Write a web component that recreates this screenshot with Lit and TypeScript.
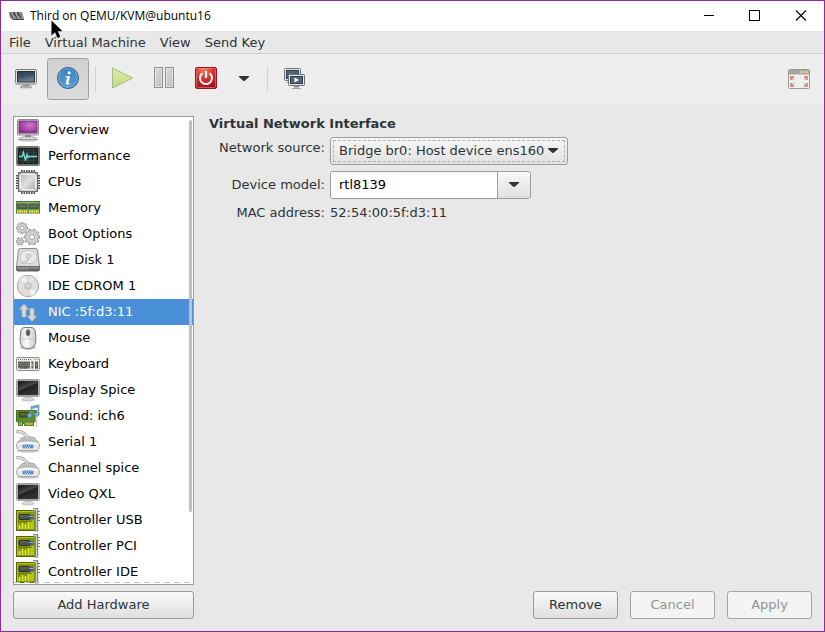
import { LitElement, html, svg, css, nothing, TemplateResult, SVGTemplateResult } from "lit";
import { customElement, property, state } from "lit/decorators.js";
import { classMap } from "lit/directives/class-map.js";

const gear = (cx: number, cy: number, r: number, hole: number, teeth: number) => {
  const pts: string[] = [];
  const step = (Math.PI * 2) / teeth;
  for (let i = 0; i < teeth; i++) {
    const a = i * step;
    for (const [da, rr] of [[-0.3, 0.78], [-0.2, 1], [0.2, 1], [0.3, 0.78]]) {
      pts.push(`${(cx + Math.cos(a + da * step) * r * rr).toFixed(2)},${(cy + Math.sin(a + da * step) * r * rr).toFixed(2)}`);
    }
  }
  return svg`<polygon points=${pts.join(" ")} fill="#d3d3d0" stroke="#8f918d" stroke-width=".9"/>
    <circle cx=${cx} cy=${cy} r=${hole} fill="#fafafa" stroke="#9b9d99" stroke-width=".9"/>`;
};

const darkScreen = svg`
  <defs><linearGradient id="dk" x1="0" y1="0" x2=".6" y2="1">
    <stop offset="0" stop-color="#111"/><stop offset=".5" stop-color="#4a4a4a"/><stop offset=".55" stop-color="#222"/><stop offset="1" stop-color="#333"/>
  </linearGradient></defs>
  <ellipse cx="12" cy="22" rx="7" ry="1.6" fill="#000" opacity=".15"/>
  <path d="M9 18h6l.6 3h-7.2z" fill="#d3d5d2"/>
  <rect x="7" y="20" width="10" height="2" rx="1" fill="#eeeeec" stroke="#acaeab" stroke-width=".7"/>
  <rect x=".5" y="1.500" width="23" height="17" rx="1" fill="#e9e9e7" stroke="#a0a29f"/>
  <rect x="2" y="3" width="20" height="14" fill="url(#dk)" stroke="#2b2b2b" stroke-width=".7"/>`;

const serial = svg`
  <defs><linearGradient id="se" x1="0" y1="0" x2="0" y2="1"><stop offset="0" stop-color="#c9cac7"/><stop offset="1" stop-color="#f1f1f0"/></linearGradient></defs>
  <ellipse cx="12" cy="21" rx="11.500" ry="1.800" opacity=".2"/>
  <path d="M5.500 8Q12 5 18.500 8L23.200 14Q24.200 19.500 20 20.500H4Q-.2 19.500 .8 14z" fill="url(#se)" stroke="#9fa19d"/>
  <path d="M5.500 9.500Q12 6.500 18.500 9.500l2.500 3.500Q12 10 3 13z" fill="#b9bbb7"/>
  <path d="M0 1.500c6-.5 10 2 12 7.500" fill="none" stroke="#a5a7a3" stroke-width="3"/>
  <path d="M0 1.500c6-.5 10 2 12 7.500" fill="none" stroke="#e4e5e3" stroke-width="1.400"/>
  <path d="M1.500 14.500Q12 10.500 22.500 14.500" fill="none" stroke="#fff" stroke-width="1.400"/>
  <rect x="6.500" y="14.500" width="11" height="4" rx="1.500" fill="#4a86c8" stroke="#b4c7dc"/>
  <path d="M8 16h8M9 17.500h6" stroke="#c9ddf2" stroke-dasharray="1 1"/>`;

const card = svg`
  <rect x=".5" y="2.500" width="19" height="20" fill="#87960c" stroke="#56640c"/>
  <path d="M1.500 21.500v-18h17" fill="none" stroke="#b4c31c"/>
  <path d="M14 13l4-1v9h-4z" fill="#b5c51a"/>
  <path d="M3.500 21v-4M6.500 21v-6M9.500 21v-5M12.500 21v-7" stroke="#dde83a" stroke-width="1.800"/>
  <path d="M1.500 13.500h14" stroke="#6c7a0c"/>
  <rect x="3" y="6.500" width="11" height="5" rx="1" fill="#4d504c" stroke="#2e302d"/>
  <path d="M4 8h9" stroke="#6f726e"/>
  <rect x="13.500" y="7" width="4" height="4" fill="#2f5d90"/><path d="M13.500 8.500h4" stroke="#8ab3dd"/>
  <path d="M24 3.500h-3M24 6.500h-3M24 9.500h-3M24 12.500h-3" stroke="#80827e" stroke-width="1.200"/>
  <path d="M17 1.500h3.500v22" fill="none" stroke="#73756f" stroke-width="3.400"/>
  <path d="M17 1.500h3.500v22" fill="none" stroke="#cdcfcb" stroke-width="1.400"/>`;

const icons: Record<string, SVGTemplateResult> = {
  overview: svg`<defs><radialGradient id="pu" cx=".6" cy=".35" r=".7"><stop offset="0" stop-color="#cf74cf"/><stop offset="1" stop-color="#8e2d96"/></radialGradient></defs>
    <ellipse cx="12" cy="22" rx="10.500" ry="1.800" opacity=".2"/>
    <path d="M9 17h6v3h-6z" fill="#8a8c88"/>
    <path d="M3 21.500q1-2.500 4-2.500h10q3 0 4 2.500z" fill="#e6e6e4" stroke="#888a85" stroke-width=".8"/>
    <rect x="1.500" y="1.500" width="21" height="15.500" rx="1" fill="#d9dad7" stroke="#8b8d89"/>
    <rect x="3" y="3" width="18" height="12" fill="url(#pu)" stroke="#6c2a70" stroke-width=".8"/>`,
  performance: svg`<rect x=".5" y="2.500" width="23" height="19" rx="1" fill="#cfd1ce" stroke="#747672"/>
    <rect x="2" y="4" width="20" height="16" fill="#243031" stroke="#111"/>
    <path d="M3 8.500h18M3 12.500h18M3 16.500h18M7.500 4v16M12.500 4v16M17.500 4v16" stroke="#35494a" stroke-width=".6"/>
    <path d="M3 12.500h3l1.500-4 2 8 1.500-6 1 3 1-1h8" fill="none" stroke="#6fe6cd" stroke-width="1.300"/>`,
  cpu: svg`<defs><linearGradient id="cp" x1="0" y1="0" x2="1" y2="1"><stop offset="0" stop-color="#b9b9b7"/><stop offset=".5" stop-color="#e0e0de"/><stop offset="1" stop-color="#a9aaa8"/></linearGradient></defs>
    <path d="M5 1.500h15M5 22.500h15M1.500 5v15M22.500 5v15" stroke="#555753" stroke-width="3" stroke-dasharray="1.600 .9"/>
    <rect x="2.500" y="2.500" width="19" height="19" rx="1.500" fill="#d5d6d3" stroke="#6d6f6b"/>
    <path d="M2 2l3 3M22 2l-3 3M2 22l3-3M22 22l-3-3" stroke="#6d6f6b"/>
    <rect x="4.500" y="4.500" width="15" height="15" rx="1" fill="url(#cp)" stroke="#f1f1f0"/>`,
  memory: svg`<rect x=".5" y="5.500" width="23" height="11" fill="#5f9848" stroke="#4c7a3b"/>
    <path d="M1 7h22" stroke="#a6cf92"/>
    <rect x="2" y="8" width="9" height="4.500" fill="#5b5d59" stroke="#3c5a32" stroke-width=".8"/><rect x="13" y="8" width="9" height="4.500" fill="#5b5d59" stroke="#3c5a32" stroke-width=".8"/>
    <path d="M3 10h7M14 10h7" stroke="#7d7f7b"/>
    <path d="M1 15.500h10.500M13 15.500h10" stroke="#e8d44d" stroke-width="3" stroke-dasharray="1.700 .6"/>
    <path d="M0 17.500h24" stroke="#6a8a5a" opacity=".6"/>`,
  boot: svg`${gear(16, 15, 8, 2.6, 10)}${gear(6, 6, 5.8, 2, 8)}${gear(4, 19.5, 4, 1.3, 6)}`,
  disk: svg`<defs><linearGradient id="hd" x1="0" y1="0" x2="0" y2="1"><stop offset="0" stop-color="#a5a7a4"/><stop offset="1" stop-color="#484a47"/></linearGradient></defs>
    <path d="M.5 18.500L2.500 2q.3-1.500 1.700-1.500h15.600q1.400 0 1.700 1.500L23.500 18.500z" fill="#dcdddb" stroke="#8b8d89"/>
    <ellipse cx="12.500" cy="9" rx="8.500" ry="6.800" fill="#e9e9e8" stroke="#c3c5c1"/>
    <ellipse cx="12.500" cy="8" rx="2.500" ry="2" fill="#dcdddb" stroke="#bbbdb9"/>
    <path d="M5 15.500l5-1.500 3-4" fill="none" stroke="#c3c5c1" stroke-width="1.600"/>
    <path d="M.5 18.500h23v3q0 1.500-1.500 1.500H2Q.5 23 .5 21.500z" fill="url(#hd)" stroke="#666864"/>
    <path d="M3 21h9" stroke="#b9bbb7" stroke-dasharray="1 1"/>`,
  cdrom: svg`<circle cx="12" cy="12" r="10.700" fill="#dededc" stroke="#a9aba7"/>
    <path d="M12 12L4 5.500Q6 3 9 2zM12 12l8 6.500Q18 21 15 22z" fill="#f0f0ef"/>
    <path d="M12 12L2.500 8 4 5.500z" fill="#e3d9ee"/><path d="M12 12l9.500 4L20 18.500z" fill="#d2e6ea"/><path d="M12 12l3-9.500L18 4z" fill="#eee9d4"/><path d="M12 12L9 21.500 6 20z" fill="#f0dcca"/>
    <circle cx="12" cy="12" r="3.500" fill="#d2d3d0" stroke="#c0c2be"/><circle cx="12" cy="12" r="1.500" fill="#fff" stroke="#b1b3af" stroke-width=".8"/>`,
  nic: svg`<path d="M8 4l4.700 5.500H10V17H6V9.500H3.300z" fill="#dad8d5" stroke="#b2aca6" stroke-width=".8"/>
    <path d="M16 21.500L11.300 16H14V8.500h4V16h2.700z" fill="#dad8d5" stroke="#b2aca6" stroke-width=".8"/>`,
  mouse: svg`<defs><linearGradient id="mo" x1="0" y1="0" x2="1" y2="0"><stop offset="0" stop-color="#d3d4d1"/><stop offset=".4" stop-color="#fbfbfb"/><stop offset="1" stop-color="#c7c8c5"/></linearGradient></defs>
    <ellipse cx="12" cy="21.500" rx="8" ry="2.200" opacity=".25"/>
    <path d="M4.500 7Q4.500 1.500 9 1.500h6q4.500 0 4.500 5.500l.5 6q0 9.500-8 9.500T4 13z" fill="url(#mo)" stroke="#7c7e7a"/>
    <path d="M4.500 12Q8 14.500 12 12.500q4 2 7.500-.5M12 2v3" fill="none" stroke="#c3c5c1" stroke-width=".8"/>
    <rect x="10" y="3.500" width="4" height="6.500" rx="2" fill="#555753" stroke="#9a9c98" stroke-width=".7"/>`,
  keyboard: svg`<rect x=".5" y="5.500" width="23" height="13" rx="1" fill="#ecedeb" stroke="#8e908c"/>
    <path d="M2 7.500h14" stroke="#666864" stroke-dasharray="1 1"/><path d="M18 7.500h4" stroke="#73d216" stroke-dasharray="1 .5"/>
    <rect x="2" y="9.500" width="12" height="7" fill="#8d8f8b"/><rect x="15.500" y="9.500" width="2" height="7" fill="#8d8f8b"/><rect x="19" y="9.500" width="3" height="7" fill="#8d8f8b"/>
    <path d="M2 10.500h12M3 12.500h11M2 14.500h12M4 16h8M15.500 10.500h2M15.500 15.500h2M19 10.500h3M19 12.500h3M19 14.500h3M19 16h3" stroke="#4a4c48" stroke-width="1.300" stroke-dasharray="1.300 .6"/>`,
  display: darkScreen,
  sound: svg`<path d="M.5 6.500h20v11h-3v4h-9v-2h-2v2h-4v-4h-2z" fill="#5c8a31" stroke="#466e22"/>
    <rect x="3.500" y="8.500" width="8" height="4.500" fill="#4c5a3a" stroke="#30401f"/><path d="M4 10h7" stroke="#7a6a3c"/>
    <path d="M9 20h8M3 20h3" stroke="#e0c92c" stroke-width="2.400" stroke-dasharray="1.400 .7"/>
    <path d="M20.500 12v11" stroke="#d3d5d1" stroke-width="1.800"/>
    <path d="M15.500 11V3l7-1.500V10" fill="none" stroke="#5b94bd" stroke-width="1.600"/><path d="M15 4l8-2" stroke="#6fa8d0" stroke-width="2.400"/>
    <ellipse cx="13.700" cy="11.500" rx="2.300" ry="1.900" fill="#7fb3d8" stroke="#4a80a8" stroke-width=".7"/><ellipse cx="20.800" cy="10.300" rx="2.300" ry="1.900" fill="#7fb3d8" stroke="#4a80a8" stroke-width=".7"/>`,
  serial,
  controller: card,

  console: svg`<defs><linearGradient id="sc" x1="0" y1="0" x2=".3" y2="1"><stop offset="0" stop-color="#2d3d4e"/><stop offset=".5" stop-color="#3f5063"/><stop offset="1" stop-color="#72808f"/></linearGradient></defs>
    <rect x="1.500" y="2.500" width="21" height="14.500" rx="1.500" fill="#e6e6e4" stroke="#7d7f7b"/>
    <rect x="3.500" y="4.500" width="17" height="10.500" fill="url(#sc)" stroke="#25313d"/>
    <path d="M9 17.500h6v2h-6z" fill="#8f918d"/><rect x="6.500" y="19" width="11" height="1.800" rx=".9" fill="#cfd0cd" stroke="#888a85" stroke-width=".8"/>`,
  info: svg`<defs><linearGradient id="nf" x1="0" y1="0" x2="0" y2="1"><stop offset="0" stop-color="#3b7dbd"/><stop offset="1" stop-color="#5e9fd3"/></linearGradient></defs>
    <circle cx="12" cy="11" r="10.500" fill="url(#nf)" stroke="#2a5b8f"/><circle cx="12" cy="11" r="9.300" fill="none" stroke="#7fb2de" stroke-width=".8"/>
    <circle cx="13.200" cy="5.800" r="1.600" fill="#fff"/><path d="M9.500 9.200h4.600l-1.700 6.400q-.2 1 1.600.2l-.3 1q-3.900 2-3.900-.6l1.400-5.600-1.900-.4z" fill="#fff"/>`,
  play: svg`<defs><linearGradient id="pl" x1="0" y1="0" x2="0" y2="1"><stop offset="0" stop-color="#dde8a8"/><stop offset="1" stop-color="#c3dd84"/></linearGradient></defs>
    <path d="M2.500 1v20L22.500 11z" fill="url(#pl)" stroke="#a3bd7e"/>`,
  pause: svg`<defs><linearGradient id="pa" x1="0" y1="0" x2="1" y2="1"><stop offset="0" stop-color="#dededc"/><stop offset="1" stop-color="#b9bab8"/></linearGradient></defs>
    <rect x="2.500" y=".5" width="8" height="20" fill="url(#pa)" stroke="#90928e"/><rect x="13.500" y=".5" width="8" height="20" fill="url(#pa)" stroke="#90928e"/>
    <rect x="3.500" y="1.500" width="6" height="18" fill="none" stroke="#eee" opacity=".6"/><rect x="14.500" y="1.500" width="6" height="18" fill="none" stroke="#eee" opacity=".6"/>`,
  power: svg`<defs><radialGradient id="pw" cx=".4" cy=".1" r="1"><stop offset="0" stop-color="#f47b63"/><stop offset=".5" stop-color="#d62a2a"/><stop offset="1" stop-color="#8c0c1c"/></radialGradient></defs>
    <rect x="1.500" y=".5" width="21" height="21" rx="1.500" fill="url(#pw)" stroke="#9c1420"/><rect x="2.500" y="1.500" width="19" height="19" rx="1" fill="none" stroke="#f08a80" opacity=".6"/>
    <path d="M8.500 6.200a6 6 0 1 0 7 0" fill="none" stroke="#fff" stroke-width="2"/><path d="M12 4v7" stroke="#fff" stroke-width="2.200"/>`,
  screens: svg`<rect x="2.500" y="1.500" width="16" height="12" rx="1" fill="#e6e6e4" stroke="#70726e"/><rect x="4.500" y="3.500" width="12" height="8" fill="#50637a" stroke="#2e3f50"/>
    <path d="M5 15.500h3" stroke="#888a85"/>
    <rect x="6.500" y="7.500" width="16" height="11" rx="1" fill="#e6e6e4" stroke="#70726e"/><rect x="8.500" y="9.500" width="12" height="7" fill="#50637a" stroke="#2e3f50"/>
    <path d="M12.500 10.500v5l4.500-2.500z" fill="#fff"/><path d="M12 19.500h5" stroke="#888a85" stroke-width="2"/><path d="M10 21.500h9" stroke="#a0a29f"/>`,
  fullscreen: svg`<rect x="1.500" y="2.500" width="21" height="19" rx="1" fill="#efefee" stroke="#9a9b99"/><path d="M2 3h20v4.500H2z" fill="#a5a6a4"/>
    <path d="M13 5h8" stroke="#efca84" stroke-width="2" stroke-dasharray="2 1"/>
    <path d="M3 9h4v2h-1v1h1v1H6v-1H5v1H3zM21 9h-4v2h1v1h-1v1h1v-1h1v1h2zM3 20h4v-2h-1v-1h1v-1H6v1H5v-1H3zM21 20h-4v-2h1v-1h-1v-1h1v1h1v-1h2z" fill="#dd8d8d"/>`,
  arrow: svg`<path d="M7 9h10v1L12.500 14h-1L7 10z" fill="#2e3436"/>`,
};

@customElement("vm-icon")
export class VmIcon extends LitElement {
  @property() name = "";
  static styles = css`
    :host { display: block; flex: none; width: 24px; height: 24px; }
    svg { display: block; }
  `;
  render() {
    return html`<svg width="24" height="24" viewBox="0 0 24 24" aria-hidden="true">${icons[this.name] ?? nothing}</svg>`;
  }
}

interface Device { icon: string; label: string; }

@customElement("app-root")
export class AppRoot extends LitElement {
  @state() private selected = 7;

  private devices: Device[] = [
    { icon: "overview", label: "Overview" },
    { icon: "performance", label: "Performance" },
    { icon: "cpu", label: "CPUs" },
    { icon: "memory", label: "Memory" },
    { icon: "boot", label: "Boot Options" },
    { icon: "disk", label: "IDE Disk 1" },
    { icon: "cdrom", label: "IDE CDROM 1" },
    { icon: "nic", label: "NIC :5f:d3:11" },
    { icon: "mouse", label: "Mouse" },
    { icon: "keyboard", label: "Keyboard" },
    { icon: "display", label: "Display Spice" },
    { icon: "sound", label: "Sound: ich6" },
    { icon: "serial", label: "Serial 1" },
    { icon: "serial", label: "Channel spice" },
    { icon: "display", label: "Video QXL" },
    { icon: "controller", label: "Controller USB" },
    { icon: "controller", label: "Controller PCI" },
    { icon: "controller", label: "Controller IDE" },
  ];

  static styles = css`
    * { box-sizing: border-box; }
    :host {
      display: flex; flex-direction: column; position: relative;
      min-height: 100vh; box-sizing: border-box;
      border: 1px solid #8e2a9b; background: #e8e8e8; color: #2e3436;
      font: 13px/16px "DejaVu Sans", sans-serif;
    }
    button, select, input { font: inherit; color: inherit; margin: 0; }
    .titlebar { display: flex; align-items: center; height: 30px; background: #fff; padding-left: 8px; }
    .title { flex: 1; margin: 0 0 0 5px; font: 12px/16px "Open Sans", sans-serif; color: #000; }
    .winbtn { width: 46px; height: 30px; padding: 0; border: 0; background: none; display: grid; place-items: center; }
    .menubar { display: flex; height: 23px; padding-left: 1px; border-bottom: 1px solid #cfcfcf; }
    .menubar button { border: 0; background: none; padding: 2px 7px 0; }
    .toolbar { display: flex; align-items: center; height: 50px; padding: 0 4px; background: #ededed; }
    .tool { width: 42px; height: 42px; padding: 0; display: grid; place-items: center; border: 1px solid transparent; border-radius: 3px; background: none; }
    .tool.on { border-color: #a0a0a0; background: linear-gradient(#cfcfcf, #dcdcdc); }
    .tool.narrow { width: 34px; }
    .sep { width: 1px; height: 26px; margin: 0 5px 0 6px; background: #d2d2d2; }
    .grow { flex: 1; }
    .body { flex: 1; display: flex; gap: 15px; padding: 12px 12px 0; }
    .list-frame { flex: none; width: 181px; height: calc(100vh - 163px); position: relative; border: 1px solid #9a9a9a; background: #fff; overflow: hidden; }
    .list { margin: 0; padding: 0; list-style: none; color: #000; }
    .row { display: flex; align-items: center; gap: 8px; width: 100%; height: 26px; padding: 0 2px; border: 0; background: none; text-align: left; }
    .row.selected { background: #4a90d9; color: #fff; }
    .thumb { position: absolute; right: 1px; top: 3px; width: 3px; height: 84%; border-radius: 2px; background: #c0c0c0; }
    .more { position: absolute; left: 0; right: 0; bottom: 1px; height: 1px; background: repeating-linear-gradient(90deg, #c2c2c2 0 6px, transparent 6px 10px); }
    .panel { flex: 1; }
    h1 { margin: 0 0 5px; font: bold 13px/16px "DejaVu Sans", sans-serif; }
    .form { display: grid; grid-template-columns: 116px 1fr; column-gap: 5px; row-gap: 6px; align-items: center; }
    .form label, .form .name { text-align: right; }
    .form .top { align-self: start; padding-top: 3px; }
    .pick { position: relative; justify-self: start; width: 238px; }
    .pick select { appearance: none; display: block; width: 100%; height: 28px; padding: 0 16px 0 8px; border: 1px solid #9c9c9c; border-radius: 3px; background: linear-gradient(#f6f6f6, #e2e2e2); outline: 1px dashed #b0b0b0; outline-offset: -4px; }
    .pick vm-icon { position: absolute; right: 3px; top: 2px; pointer-events: none; }
    .combo { display: flex; width: 201px; height: 28px; border: 1px solid #9c9c9c; border-radius: 3px; overflow: hidden; }
    .combo input { flex: 1; min-width: 0; border: 0; padding: 0 8px; color: #000; background: linear-gradient(#f4f4f4, #fff 5px); outline: 0; }
    .combo button { width: 33px; padding: 0; display: grid; place-items: center; border: 0; border-left: 1px solid #9c9c9c; background: linear-gradient(#f8f8f8, #e0e0e0); }
    .footer { display: flex; gap: 12px; padding: 6px 12px 12px; }
    .btn { width: 85px; height: 28px; padding: 0; border: 1px solid #9c9c9c; border-radius: 3px; background: linear-gradient(#fafafa, #dfdfdf); }
    .btn.wide { width: 181px; }
    .btn:disabled { background: #f4f4f4; color: #919494; border-color: #a4a4a4; }
    .cursor { position: absolute; left: 49px; top: 18px; pointer-events: none; }
  `;

  private tool(name: string, label: string, cls = ""): TemplateResult {
    return html`<button class="tool ${cls}" aria-label=${label}><vm-icon name=${name}></vm-icon></button>`;
  }

  render() {
    return html`
      <header class="titlebar">
        <svg width="16" height="16" viewBox="0 0 16 16" aria-hidden="true">
          <path d="M0 4h13l2 7-1 1H4L1 10z" fill="#8a8b8d"/>
          <path d="M1 5l3 5 1-5 3 5 1-5 3 5" fill="none" stroke="#444" stroke-width="1.200"/>
          <path d="M3 5l2 5M7 5l2 5" stroke="#c4c4c4"/><path d="M4 11.500h11" stroke="#4a4a4a"/>
        </svg>
        <p class="title">Third on QEMU/KVM@ubuntu16</p>
        <button class="winbtn" aria-label="Minimize"><svg width="12" height="12"><path d="M1 5.500h10" stroke="#000"/></svg></button>
        <button class="winbtn" aria-label="Maximize"><svg width="12" height="12"><rect x=".5" y=".5" width="10" height="10" fill="none" stroke="#000"/></svg></button>
        <button class="winbtn" aria-label="Close"><svg width="12" height="12"><path d="M1 .500l10 10M11 .500L1 10.500" stroke="#000" stroke-width="1.100"/></svg></button>
      </header>
      <nav class="menubar">
        ${["File", "Virtual Machine", "View", "Send Key"].map((m) => html`<button>${m}</button>`)}
      </nav>
      <div class="toolbar" role="toolbar">
        ${this.tool("console", "Console")}${this.tool("info", "Details", "on")}
        <span class="sep"></span>
        ${this.tool("play", "Run")}${this.tool("pause", "Pause")}${this.tool("power", "Shut down")}${this.tool("arrow", "Shut down options", "narrow")}
        <span class="sep"></span>
        ${this.tool("screens", "Snapshots")}
        <span class="grow"></span>
        ${this.tool("fullscreen", "Fullscreen")}
      </div>
      <main class="body">
        <div class="list-frame">
          <ul class="list">
            ${this.devices.map((d, i) => html`<li>
              <button class=${classMap({ row: true, selected: i === this.selected })} @click=${() => (this.selected = i)}>
                <vm-icon name=${d.icon}></vm-icon><span>${d.label}</span>
              </button></li>`)}
          </ul>
          <div class="thumb"></div>
          <div class="more"></div>
        </div>
        <section class="panel">
          <h1>Virtual Network Interface</h1>
          <div class="form">
            <label class="top" for="source">Network source:</label>
            <div class="pick">
              <select id="source"><option>Bridge br0: Host device ens160</option></select>
              <vm-icon name="arrow"></vm-icon>
            </div>
            <label for="model">Device model:</label>
            <div class="combo">
              <input id="model" .value=${"rtl8139"}>
              <button aria-label="Choose device model"><vm-icon name="arrow"></vm-icon></button>
            </div>
            <span class="name">MAC address:</span>
            <span>52:54:00:5f:d3:11</span>
          </div>
        </section>
      </main>
      <footer class="footer">
        <button class="btn wide">Add Hardware</button>
        <span class="grow"></span>
        <button class="btn">Remove</button>
        <button class="btn" disabled>Cancel</button>
        <button class="btn" disabled>Apply</button>
      </footer>
      <svg class="cursor" width="14" height="22" viewBox="0 0 14 22" aria-hidden="true">
        <path d="M1.500 1.500v15l3.500-3.300L7.500 19l2.800-1.200L7.800 12.300h4.700z" fill="#000"/>
      </svg>
    `;
  }
}
